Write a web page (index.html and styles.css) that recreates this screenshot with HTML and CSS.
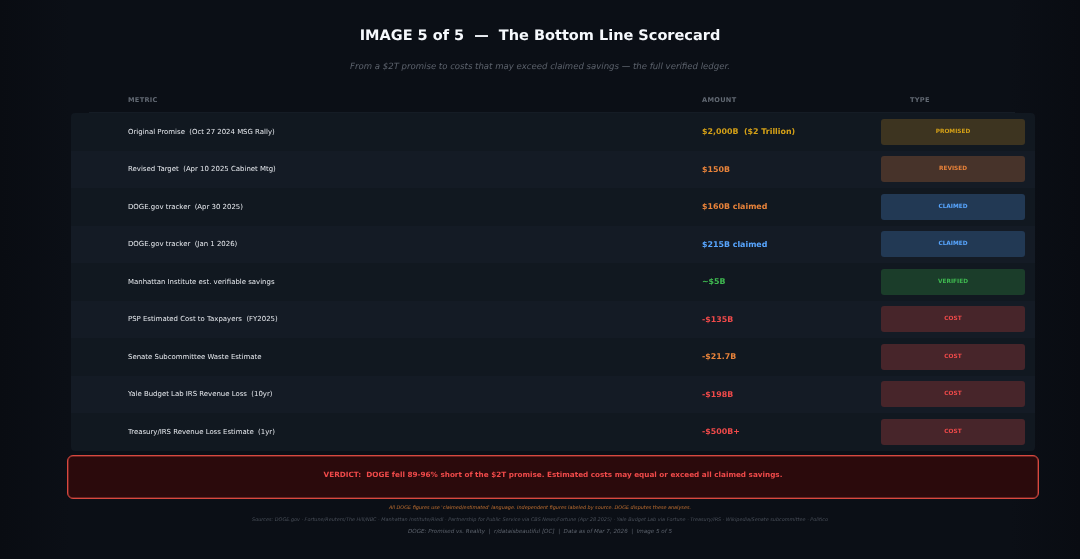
FILE: index.html
```html
<!DOCTYPE html>
<html lang="en">
<head>
<meta charset="utf-8">
<title>The Bottom Line Scorecard</title>
<link rel="stylesheet" href="styles.css">
</head>
<body>
<main class="page">
  <h1 class="title">IMAGE 5 of 5  —  The Bottom Line Scorecard</h1>
  <p class="subtitle">From a $2T promise to costs that may exceed claimed savings — the full verified ledger.</p>
  <div class="head">
    <span class="head-metric">METRIC</span>
    <span class="head-amount">AMOUNT</span>
    <span class="head-type">TYPE</span>
  </div>
  <section class="table">
    <div class="row"><span class="metric">Original Promise  (Oct 27 2024 MSG Rally)</span><span class="amount gold">$2,000B  ($2 Trillion)</span><span class="badge b-gold">PROMISED</span></div>
    <div class="row alt"><span class="metric">Revised Target  (Apr 10 2025 Cabinet Mtg)</span><span class="amount orange">$150B</span><span class="badge b-orange">REVISED</span></div>
    <div class="row"><span class="metric">DOGE.gov tracker  (Apr 30 2025)</span><span class="amount orange">$160B claimed</span><span class="badge b-blue">CLAIMED</span></div>
    <div class="row alt"><span class="metric">DOGE.gov tracker  (Jan 1 2026)</span><span class="amount blue">$215B claimed</span><span class="badge b-blue">CLAIMED</span></div>
    <div class="row"><span class="metric">Manhattan Institute est. verifiable savings</span><span class="amount green">~$5B</span><span class="badge b-green">VERIFIED</span></div>
    <div class="row alt"><span class="metric">PSP Estimated Cost to Taxpayers  (FY2025)</span><span class="amount red">-$135B</span><span class="badge b-red">COST</span></div>
    <div class="row"><span class="metric">Senate Subcommittee Waste Estimate</span><span class="amount orange">-$21.7B</span><span class="badge b-red">COST</span></div>
    <div class="row alt"><span class="metric">Yale Budget Lab IRS Revenue Loss  (10yr)</span><span class="amount red">-$198B</span><span class="badge b-red">COST</span></div>
    <div class="row"><span class="metric">Treasury/IRS Revenue Loss Estimate  (1yr)</span><span class="amount red">-$500B+</span><span class="badge b-red">COST</span></div>
  </section>
  <div class="verdict">VERDICT:  DOGE fell 89-96% short of the $2T promise. Estimated costs may equal or exceed all claimed savings.</div>
  <p class="note">All DOGE figures use 'claimed/estimated' language. Independent figures labeled by source. DOGE disputes these analyses.</p>
  <p class="sources">Sources: DOGE.gov · Fortune/Reuters/The Hill/NBC · Manhattan Institute/Riedl · Partnership for Public Service via CBS News/Fortune (Apr 28 2025) · Yale Budget Lab via Fortune · Treasury/IRS · Wikipedia/Senate subcommittee · Politico</p>
  <p class="credit">DOGE: Promised vs. Reality  |  r/dataisbeautiful [OC]  |  Data as of Mar 7, 2026  |  Image 5 of 5</p>
</main>
</body>
</html>
```
FILE: styles.css
```css
* { box-sizing: border-box; }
html, body { margin: 0; height: 100%; }
body {
  background: #0b0f16;
  font-family: "DejaVu Sans", sans-serif;
  text-rendering: geometricPrecision;
  overflow: hidden;
}
.page {
  height: 559px;
  display: flex;
  flex-direction: column;
  align-items: stretch;
  padding-top: 26px;
  filter: blur(0.3px);
  background: linear-gradient(90deg, #090c12 0, #0b0f16 70px, #0b0f16 1010px, #090c12 1080px);
}
.title, .subtitle, .metric, .amount, .verdict, .note, .sources, .credit { white-space: pre; }
.title {
  margin: 0;
  height: 20px;
  line-height: 20px;
  font-size: 14.5px;
  font-weight: 700;
  color: #f6f9fd;
  text-align: center;
}
.subtitle {
  margin: 14px 0 0;
  height: 14px;
  line-height: 14px;
  font-size: 8.55px;
  font-style: italic;
  color: #5c626c;
  text-align: center;
}
.head {
  margin: 20px 65px 0 89px;
  padding-left: 39px;
  height: 19px;
  display: grid;
  grid-template-columns: 574px 208px auto;
  align-items: end;
  padding-bottom: 7px;
  font-size: 6.6px;
  font-weight: 700;
  letter-spacing: 0.3px;
  line-height: 9px;
  color: #626973;
  border-bottom: 1px solid #151c25;
}
.table {
  margin: 0 45px 0 71px;
  border-radius: 4px;
  overflow: hidden;
}
.row {
  height: 37.5px;
  display: grid;
  grid-template-columns: 631px 179px 144px;
  align-items: center;
  background: #111820;
}
.row.alt { background: #141b25; }
.metric {
  padding-left: 57px;
  font-size: 6.95px;
  color: #e6e9ee;
}
.amount {
  font-size: 7.9px;
  font-weight: 700;
}
.badge {
  height: 26px;
  border-radius: 3px;
  display: flex;
  align-items: center;
  justify-content: center;
  font-size: 5.8px;
  font-weight: 700;
}
.gold { color: #d4a017; }
.orange { color: #e8833a; }
.blue { color: #58a6ff; }
.green { color: #3fb950; }
.red { color: #f04a4a; }
.b-gold { background: #3d3420; color: #d4a017; }
.b-orange { background: #47332a; color: #e8833a; }
.b-blue { background: #223954; color: #58a6ff; }
.b-green { background: #1b3d2a; color: #3fb950; }
.b-red { background: #47252a; color: #f04a4a; }
.verdict {
  margin: 4px 41px 0 67px;
  height: 44px;
  padding-top: 13px;
  border: 1px solid #d8483f;
  box-shadow: inset 0 0 0 0.5px #a83a34;
  border-radius: 6px;
  background: #2b0a0c;
  color: #f04a4a;
  font-size: 7.25px;
  font-weight: 700;
  text-align: center;
  line-height: 12px;
}
.note, .sources, .credit {
  margin: 0;
  text-align: center;
  font-style: italic;
}
.note {
  margin-top: 4px;
  height: 10px;
  line-height: 10px;
  font-size: 4.9px;
  color: #c27030;
}
.sources {
  margin-top: 2px;
  height: 11px;
  line-height: 11px;
  font-size: 4.93px;
  color: #4a505a;
}
.credit {
  margin-top: 1px;
  height: 11px;
  line-height: 11px;
  font-size: 5.6px;
  color: #5c626c;
}
```
